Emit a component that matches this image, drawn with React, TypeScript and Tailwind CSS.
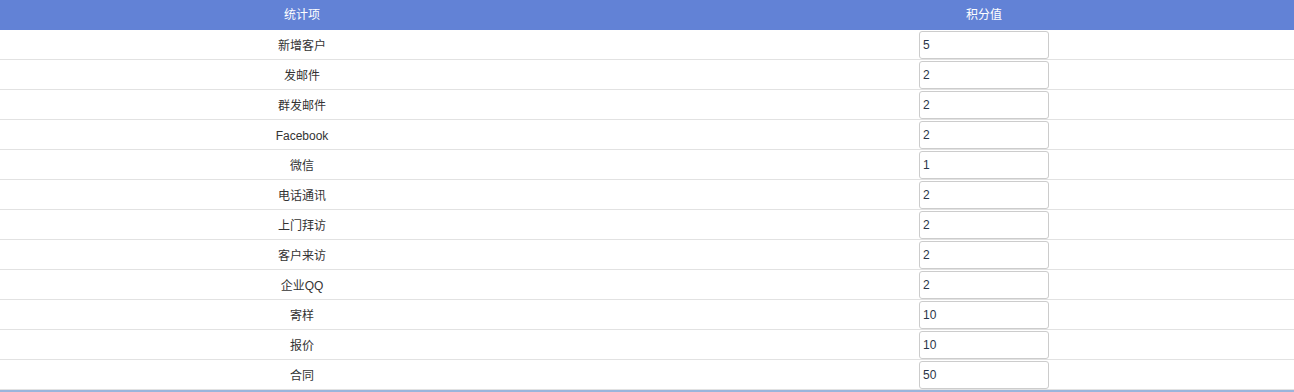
// Points settings table: one row per tracked activity with an editable score
const rows: { label: string; score: string }[] = [
  { label: '新增客户', score: '5' },
  { label: '发邮件', score: '2' },
  { label: '群发邮件', score: '2' },
  { label: 'Facebook', score: '2' },
  { label: '微信', score: '1' },
  { label: '电话通讯', score: '2' },
  { label: '上门拜访', score: '2' },
  { label: '客户来访', score: '2' },
  { label: '企业QQ', score: '2' },
  { label: '寄样', score: '10' },
  { label: '报价', score: '10' },
  { label: '合同', score: '50' },
];

const font = { fontFamily: '"Liberation Sans", "Noto Sans CJK SC", sans-serif' };

export default function App() {
  return (
    <div className="w-[1294px] h-[392px] overflow-hidden bg-white text-[12px] text-[#333]" style={font}>
      <div className="w-[1364px] border-b-2 border-[#9ab5dc]">
        <div className="grid grid-cols-[604px_760px] h-[30px] bg-[#6282d6] text-white items-center text-center">
          <div>统计项</div>
          <div>积分值</div>
        </div>
        {rows.map((row) => (
          <div key={row.label} className="grid grid-cols-[604px_760px] h-[30px] border-b border-[#e2e2e2] items-center text-center">
            <div className="pt-[2px]">{row.label}</div>
            <div className="flex justify-center">
              <input
                defaultValue={row.score}
                className="w-[130px] h-[28px] px-[3px] pt-px border border-[#cccccc] rounded-[3px] text-[12px] text-[#2b3548] bg-white outline-none"
                style={font}
              />
            </div>
          </div>
        ))}
      </div>
    </div>
  );
}
